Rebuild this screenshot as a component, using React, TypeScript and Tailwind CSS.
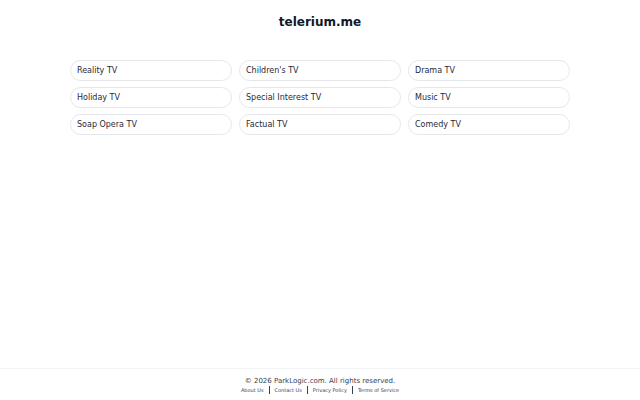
const items = [
  "Reality TV",
  "Children's TV",
  "Drama TV",
  "Holiday TV",
  "Special Interest TV",
  "Music TV",
  "Soap Opera TV",
  "Factual TV",
  "Comedy TV",
];

const links = ["About Us", "Contact Us", "Privacy Policy", "Terms of Service"];

export default function App() {
  return (
    <div
      className="flex min-h-[400px] flex-col bg-white text-[#111827]"
      style={{ fontFamily: '"DejaVu Sans", sans-serif' }}
    >
      <main className="flex-1">
        <h1 className="pt-[14px] text-center text-[12px] font-bold leading-[17px]">telerium.me</h1>
        <div className="mx-auto mt-[29px] grid w-[500px] grid-cols-3 gap-x-[7px] gap-y-[6px]">
          {items.map((item) => (
            <a
              key={item}
              href="#"
              className="flex h-[21px] items-center rounded-full border border-gray-200 px-[6px] pt-px text-[8px] text-[#1f2937]"
            >
              {item}
            </a>
          ))}
        </div>
      </main>
      <footer className="flex h-[32px] flex-col items-center border-t border-gray-100 pt-[7px]">
        <p className="text-[7px] leading-[10px] text-[#374151]">© 2026 ParkLogic.com. All rights reserved.</p>
        <div className="flex items-center text-[5px] leading-[8px] text-[#374151]">
          {links.map((l, i) => (
            <span key={l} className="flex items-center">
              {i > 0 && <span className="mx-[5px] h-[8px] w-px bg-[#374151]" />}
              {l}
            </span>
          ))}
        </div>
      </footer>
    </div>
  );
}
